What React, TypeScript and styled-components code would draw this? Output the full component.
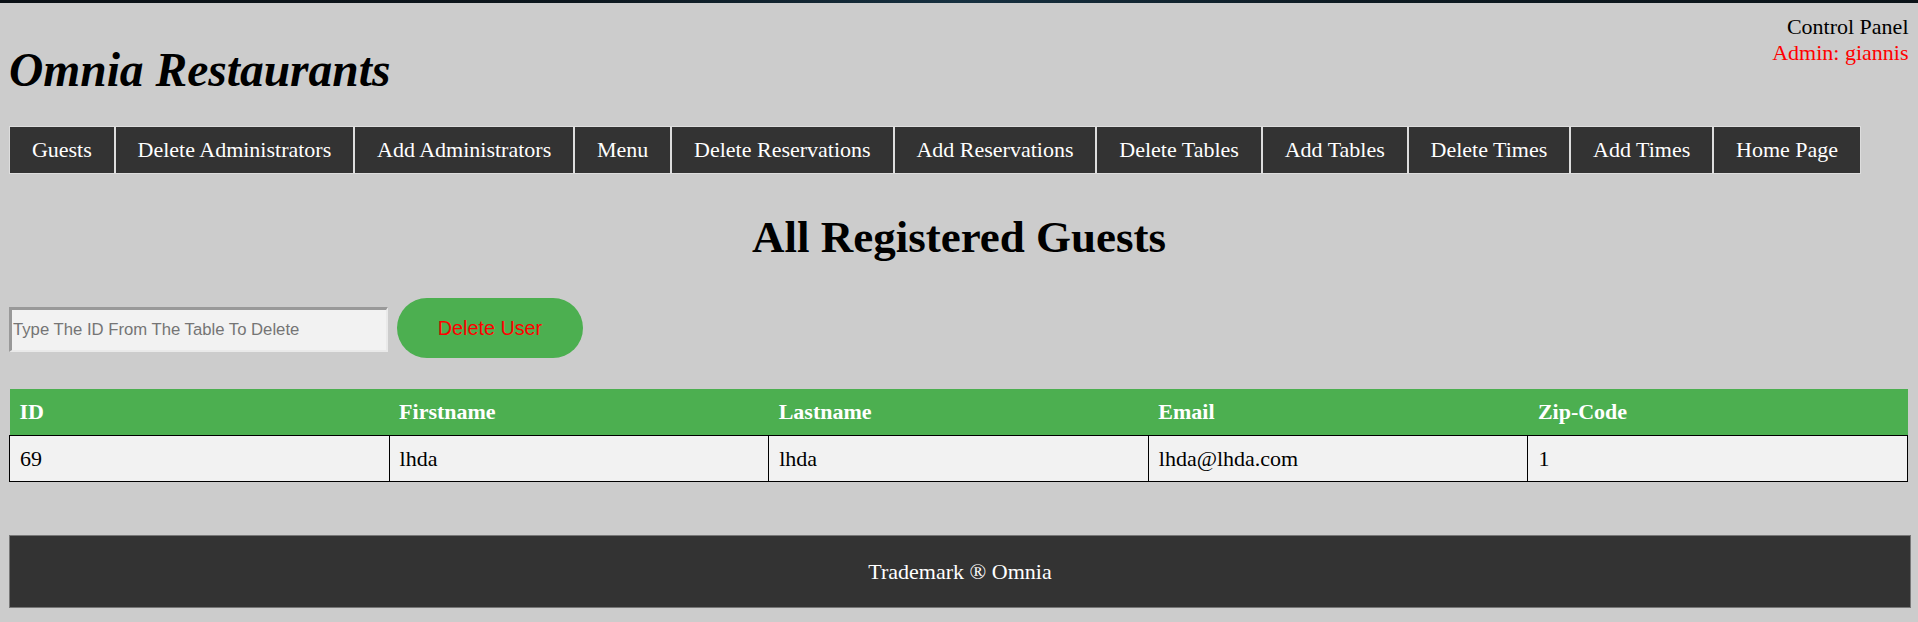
import styled, { createGlobalStyle } from "styled-components"

const GlobalStyle = createGlobalStyle`
	html, body {
		margin: 0;
		padding: 0;
		background-color: #cccccc;
		font-family: "Liberation Serif", "Times New Roman", serif;
		font-size: 22px;
		color: #000;
		overflow: hidden;
	}
`

const navItems = [
	"Guests",
	"Delete Administrators",
	"Add Administrators",
	"Menu",
	"Delete Reservations",
	"Add Reservations",
	"Delete Tables",
	"Add Tables",
	"Delete Times",
	"Add Times",
	"Home Page",
]

const columns = ["ID", "Firstname", "Lastname", "Email", "Zip-Code"]

const guests = [{ id: 69, firstname: "lhda", lastname: "lhda", email: "lhda@lhda.com", zip: "1" }]

const App = () => {
	return (
		<Page>
			<GlobalStyle />
			<TopStrip />
			<Header>
				<Title>Omnia Restaurants</Title>
				<Panel>
					<PanelLine>Control Panel</PanelLine>
					<PanelLine $admin>Admin: giannis</PanelLine>
				</Panel>
			</Header>
			<Nav>
				{navItems.map((item) => (
					<NavItem key={item} href="#">
						{item}
					</NavItem>
				))}
			</Nav>
			<Heading>All Registered Guests</Heading>
			<DeleteRow>
				<IdInput type="text" placeholder="Type The ID From The Table To Delete" />
				<DeleteButton>Delete User</DeleteButton>
			</DeleteRow>
			<Table>
				<thead>
					<HeadRow>
						{columns.map((c) => (
							<Th key={c}>{c}</Th>
						))}
					</HeadRow>
				</thead>
				<tbody>
					{guests.map((g) => (
						<tr key={g.id}>
							<Td>{g.id}</Td>
							<Td>{g.firstname}</Td>
							<Td>{g.lastname}</Td>
							<Td>{g.email}</Td>
							<Td>{g.zip}</Td>
						</tr>
					))}
				</tbody>
			</Table>
			<Footer>Trademark ® Omnia</Footer>
		</Page>
	)
}

export default App

const Page = styled.div`
	width: 1918px;
	height: 622px;
	overflow: hidden;
	display: flex;
	flex-direction: column;
`

const TopStrip = styled.div`
	flex: none;
	height: 3px;
	background: linear-gradient(90deg, #0a1015 0%, #0c161d 30%, #163040 50%, #0d1a22 70%, #0a1318 100%);
`

const Header = styled.header`
	display: flex;
	justify-content: space-between;
	align-items: flex-start;
	padding: 0 9.5px 0 9px;
`

const Title = styled.h1`
	margin: 40px 0 0;
	font-size: 47.5px;
	line-height: 54px;
	font-weight: bold;
	font-style: italic;
`

const Panel = styled.div`
	margin-top: 11px;
	text-align: right;
`

const PanelLine = styled.div<{ $admin?: boolean }>`
	line-height: 25.5px;
	color: ${(p) => (p.$admin ? "#ff0000" : "#000000")};
`

const Nav = styled.nav`
	display: flex;
	margin-top: 29px;
	padding-left: 9px;
`

const NavItem = styled.a`
	display: block;
	background-color: #333333;
	color: #ffffff;
	text-decoration: none;
	border: 1px solid #dddddd;
	padding: 10px 21.9px 11px;
	line-height: 25px;
	white-space: nowrap;
`

const Heading = styled.h2`
	margin: 37px 0 0;
	text-align: center;
	font-size: 45px;
	line-height: 52px;
	font-weight: bold;
`

const DeleteRow = styled.div`
	display: flex;
	align-items: flex-start;
	gap: 9px;
	margin-top: 35px;
	padding-left: 9px;
`

const IdInput = styled.input`
	box-sizing: border-box;
	width: 379px;
	height: 45px;
	margin-top: 9px;
	padding: 0 1px;
	background-color: #f2f2f2;
	border-style: solid;
	border-width: 3px 2px 2px 3px;
	border-color: #999999 #e9e9e9 #e9e9e9 #999999;
	font-family: "Liberation Sans", Arial, sans-serif;
	font-size: 16.7px;
	color: #000;
	outline: none;

	&::placeholder {
		color: #757575;
	}
`

const DeleteButton = styled.button`
	box-sizing: border-box;
	width: 186px;
	height: 60px;
	border: none;
	border-radius: 30px;
	background-color: #4caf50;
	color: #ff0000;
	font-family: "Liberation Sans", Arial, sans-serif;
	font-size: 19.8px;
	cursor: pointer;
`

const Table = styled.table`
	margin: 31px 10px 0 9px;
	width: 1899px;
	border-collapse: collapse;
	table-layout: fixed;
`

const HeadRow = styled.tr`
	background-color: #4caf50;
`

const Th = styled.th`
	padding: 10px 10px 11px;
	line-height: 25px;
	text-align: left;
	color: #ffffff;
	font-weight: bold;
`

const Td = styled.td`
	padding: 10px 10px;
	line-height: 25px;
	background-color: #f2f2f2;
	border: 1px solid #000000;
`

const Footer = styled.footer`
	flex: none;
	box-sizing: border-box;
	margin: 53px 7px 0 9px;
	width: 1902px;
	padding: 23px 0;
	line-height: 25px;
	background-color: #333333;
	border: 1px solid #777777;
	color: #ffffff;
	text-align: center;
`
